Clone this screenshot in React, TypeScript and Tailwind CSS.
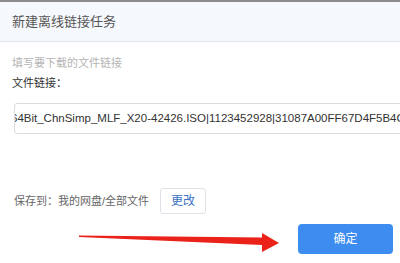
export default function App() {
  return (
    <div
      className="relative w-[400px] h-[263px] overflow-hidden bg-white"
      style={{ fontFamily: '"Liberation Sans", "Noto Sans CJK SC", sans-serif' }}
    >
      {/* header */}
      <div className="h-[42px] border-t-2 border-t-[#8c8c8c] border-b border-b-[#e3e7ec] bg-[#f5f8fc] px-3 flex items-center">
        <span className="text-[13px] text-[#555]">新建离线链接任务</span>
      </div>

      {/* body */}
      <div className="pl-3 flex flex-col">
        <div className="mt-[14px] text-[11px] leading-[14px] text-[#b5b5b5]">填写要下载的文件链接</div>
        <div className="mt-[6px] text-[11px] leading-[14px] text-[#333]">文件链接：</div>

        {/* input runs past the right edge of the window */}
        <div className="mt-[13px] ml-[2px] w-[440px] h-[31px] border border-[#dcdcdc] rounded-[3px] bg-white flex items-center overflow-hidden whitespace-nowrap">
          <span className="ml-[-4px] text-[11.5px] text-[#333]">
            64Bit_ChnSimp_MLF_X20-42426.ISO|1123452928|31087A00FF67D4F5B4CE
          </span>
        </div>

        <div className="mt-[54px] ml-[2px] flex items-center">
          <span className="text-[11px] text-[#666]">保存到：我的网盘/全部文件</span>
          <button className="ml-[11px] w-[46px] h-[26px] border border-[#dde2e8] rounded-[3px] bg-white text-[12px] text-[#3a72c4]">
            更改
          </button>
        </div>

        <div className="mt-[10px] flex justify-end pr-[7px]">
          <button className="w-[95px] h-[30px] rounded-[4px] bg-[#3d8cf0] text-[12px] text-white">确定</button>
        </div>
      </div>

      {/* red arrow annotation */}
      <svg className="absolute left-0 top-0 pointer-events-none" width="400" height="263" viewBox="0 0 400 263">
        <polygon
          points="79,235.5 262,237.5 262,233 279,243 262,252 262,245 79,237"
          fill="#ea2219"
        />
      </svg>
    </div>
  )
}
